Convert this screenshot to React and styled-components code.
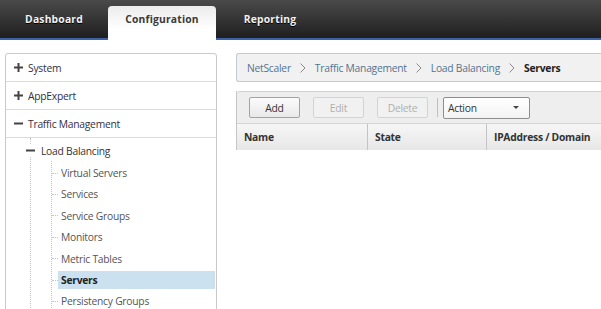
import React from "react";
import styled, { createGlobalStyle } from "styled-components";

const GlobalStyle = createGlobalStyle`
  body {
    margin: 0;
    overflow: hidden;
    background: #ffffff;
    font-family: "Open Sans", "Liberation Sans", sans-serif;
    font-size: 10.3px;
    letter-spacing: -0.25px;
    color: #333;
  }
`;

const tabs = ["Dashboard", "Configuration", "Reporting"];
const sections = ["System", "AppExpert"];
const lbItems = [
  "Virtual Servers",
  "Services",
  "Service Groups",
  "Monitors",
  "Metric Tables",
  "Servers",
  "Persistency Groups",
];
const crumbs = ["NetScaler", "Traffic Management", "Load Balancing", "Servers"];
const columns = [
  { label: "Name", width: 131 },
  { label: "State", width: 119 },
  { label: "IPAddress / Domain", width: 170 },
];

const Plus = () => (
  <svg width="9" height="9" viewBox="0 0 9 9">
    <path d="M0 4.5H9M4.5 0V9" stroke="#444" strokeWidth="2" />
  </svg>
);

const Minus = () => (
  <svg width="9" height="9" viewBox="0 0 9 9">
    <path d="M0 4.5H9" stroke="#444" strokeWidth="2" />
  </svg>
);

const Chevron = () => (
  <svg width="6" height="10" viewBox="0 0 6 10">
    <path d="M0.5 0.5L5 5L0.5 9.5" fill="none" stroke="#8a8a8a" strokeWidth="1" />
  </svg>
);

const App = () => {
  return (
    <>
      <GlobalStyle />
      <TopBar>
        {tabs.map((t) => (
          <Tab key={t} $active={t === "Configuration"}>
            {t}
          </Tab>
        ))}
      </TopBar>
      <Main>
        <NavPanel>
          {sections.map((s) => (
            <Section key={s}>
              <Plus />
              <span>{s}</span>
            </Section>
          ))}
          <Section>
            <Minus />
            <span>Traffic Management</span>
          </Section>
          <Tree>
            <TreeNode>
              <IconHolder>
                <Minus />
              </IconHolder>
              <span>Load Balancing</span>
            </TreeNode>
            <Children>
              {lbItems.map((item) => (
                <Leaf key={item}>
                  <Connector />
                  <LeafLabel $selected={item === "Servers"}>{item}</LeafLabel>
                </Leaf>
              ))}
            </Children>
          </Tree>
        </NavPanel>

        <Content>
          <Breadcrumb>
            {crumbs.map((c, i) => (
              <React.Fragment key={c}>
                {i > 0 && <Chevron />}
                <Crumb $current={i === crumbs.length - 1}>{c}</Crumb>
              </React.Fragment>
            ))}
          </Breadcrumb>
          <Grid>
            <Toolbar>
              <Button>Add</Button>
              <Button disabled>Edit</Button>
              <Button disabled>Delete</Button>
              <Divider />
              <Select>
                <span>Action</span>
                <Caret />
              </Select>
            </Toolbar>
            <HeaderRow>
              {columns.map((c) => (
                <HeaderCell key={c.label} style={{ width: c.width }}>
                  {c.label}
                </HeaderCell>
              ))}
            </HeaderRow>
          </Grid>
        </Content>
      </Main>
    </>
  );
};

const TopBar = styled.div`
  display: flex;
  align-items: flex-end;
  height: 38px;
  background: linear-gradient(#4a4a4a, #1f1f1f);
  border-bottom: 2px solid #3f61a8;
`;

const Tab = styled.div`
  width: 108px;
  height: 32px;
  margin-bottom: ${(p) => (p.$active ? "-2px" : "0")};
  padding-bottom: ${(p) => (p.$active ? "2px" : "0")};
  box-sizing: content-box;
  line-height: 27px;
  text-align: center;
  font-family: "Open Sans", sans-serif;
  font-weight: 700;
  font-size: 10.3px;
  letter-spacing: 0.2px;
  color: ${(p) => (p.$active ? "#3a3a3a" : "#f2f2f2")};
  background: ${(p) =>
    p.$active ? "linear-gradient(#ececec, #ffffff 70%)" : "transparent"};
  border-radius: 4px 4px 0 0;
  text-shadow: ${(p) => (p.$active ? "none" : "0 1px 0 #000")};
`;

const Main = styled.div`
  display: flex;
  align-items: flex-start;
  gap: 19px;
  padding: 13px 0 0 5px;
`;

const NavPanel = styled.div`
  flex: none;
  width: 210px;
  height: 300px;
  border: 1px solid #c9c9c9;
  border-radius: 3px;
  overflow: hidden;
`;

const Section = styled.div`
  display: flex;
  align-items: center;
  gap: 5px;
  height: 27px;
  padding-left: 8px;
  border-bottom: 1px solid #dcdcdc;
  color: #332f3f;
`;

const Tree = styled.div`
  margin-left: 24px;
  border-left: 1px dotted #c4c4c4;
  padding-top: 2px;
`;

const TreeNode = styled.div`
  display: flex;
  align-items: center;
  gap: 6px;
  height: 21.4px;
  color: #333;
`;

const IconHolder = styled.span`
  display: flex;
  margin-left: -5px;
  background: #fff;
  padding: 2px 0;
`;

const Children = styled.div`
  margin-left: 20px;
  border-left: 1px dotted #c4c4c4;
  padding-top: 1px;
`;

const Leaf = styled.div`
  display: flex;
  align-items: center;
  height: 21.4px;
  color: #555;
`;

const Connector = styled.span`
  flex: none;
  width: 6px;
  border-top: 1px dotted #c4c4c4;
`;

const LeafLabel = styled.span`
  flex: 1;
  margin-right: 1px;
  height: 18px;
  line-height: 18px;
  padding-left: 3px;
  background: ${(p) => (p.$selected ? "#cbe1f0" : "transparent")};
  font-weight: ${(p) => (p.$selected ? 700 : 400)};
  color: ${(p) => (p.$selected ? "#222" : "#555")};
`;

const Content = styled.div`
  flex: none;
  width: 420px;
`;

const Breadcrumb = styled.div`
  display: flex;
  align-items: center;
  gap: 9px;
  height: 27px;
  padding-left: 10px;
  background: #f1f1f1;
  border: 1px solid #c3cad3;
  border-right: none;
  border-radius: 3px 0 0 3px;
`;

const Crumb = styled.span`
  color: ${(p) => (p.$current ? "#222" : "#55738f")};
  font-weight: ${(p) => (p.$current ? 700 : 400)};
`;

const Grid = styled.div`
  margin-top: 9px;
  border-left: 1px solid #c6c6c6;
`;

const Toolbar = styled.div`
  display: flex;
  align-items: center;
  height: 31px;
  padding-left: 12px;
  background: #eeeeee;
  border-top: 1px solid #cfcfcf;
  border-radius: 3px 0 0 0;
`;

const Button = styled.button`
  width: 51px;
  height: 21px;
  margin-right: 13px;
  padding: 0;
  font-family: "Open Sans", sans-serif;
  font-size: 10.3px;
  letter-spacing: -0.25px;
  color: ${(p) => (p.disabled ? "#b0b0b0" : "#333")};
  background: ${(p) =>
    p.disabled ? "#f1f1f1" : "linear-gradient(#fbfbfb, #e9e9e9)"};
  border: 1px solid ${(p) => (p.disabled ? "#d3d3d3" : "#a3a3a3")};
  border-radius: 2px;
`;

const Divider = styled.span`
  width: 1px;
  height: 19px;
  margin: 0 5px 0 -4px;
  background: #c0c0c0;
`;

const Select = styled.div`
  display: flex;
  align-items: center;
  justify-content: space-between;
  box-sizing: border-box;
  width: 87px;
  height: 22px;
  padding: 0 10px 0 4px;
  background: linear-gradient(#ffffff, #f3f3f3);
  border: 1px solid #8e8e8e;
  border-radius: 2px;
  color: #333;
`;

const Caret = styled.span`
  width: 0;
  height: 0;
  border-left: 3px solid transparent;
  border-right: 3px solid transparent;
  border-top: 3px solid #444;
`;

const HeaderRow = styled.div`
  display: flex;
  height: 26px;
  background: linear-gradient(#f6f6f6, #e7e7e7);
  border-top: 1px solid #d4d4d4;
`;

const HeaderCell = styled.div`
  flex: none;
  box-sizing: border-box;
  padding-left: 7px;
  line-height: 26px;
  font-weight: 700;
  color: #333;
  border-right: 1px solid #c4c4c4;
`;

export default App;
